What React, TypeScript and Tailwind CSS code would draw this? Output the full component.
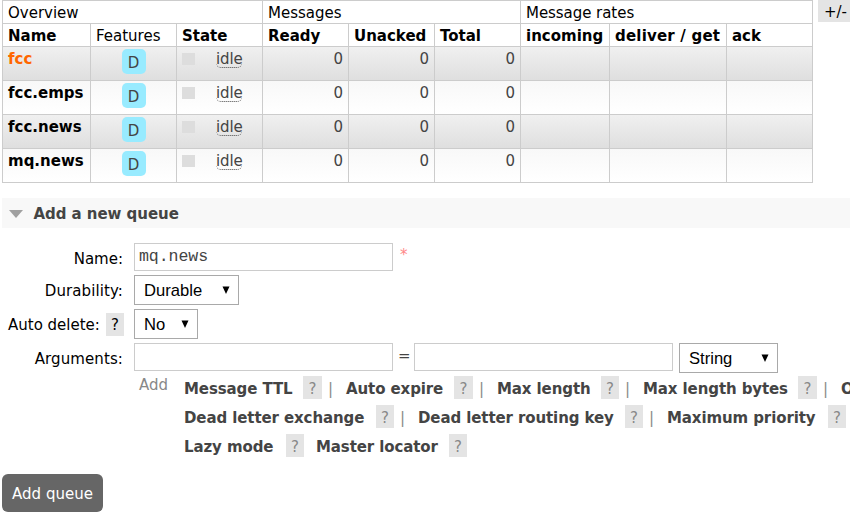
import React from "react";

const queues = ["fcc", "fcc.emps", "fcc.news", "mq.news"];

function Help({ className }: { className: string }) {
  return (
    <span className={`block h-[23px] shrink-0 bg-[#e4e4e4] text-center leading-5 ${className}`}>?</span>
  );
}

function Arrow() {
  return (
    <svg width="8" height="8" viewBox="0 0 8 8" className="shrink-0">
      <path d="M0.5 0.5H7.5L4 8Z" fill="#000" />
    </svg>
  );
}

function Select({ label, className }: { label: string; className: string }) {
  return (
    <div
      className={`flex h-[30px] shrink-0 items-center justify-between border border-[#a9a9a9] bg-white pr-[8px] pl-[9px] font-['Liberation_Sans',Arial,sans-serif] text-[16.6px] leading-5 text-black ${className}`}
    >
      <span className="pt-[2px]">{label}</span>
      <Arrow />
    </div>
  );
}

function Field({ value = "" }: { value?: string }) {
  return (
    <div className="h-7 w-[259px] shrink-0 border border-[#ccc] bg-white pt-[3px] pl-[4px] font-['Liberation_Mono','Courier_New',monospace] text-[16.6px] leading-5 tracking-[-0.1px] text-[#444]">
      {value}
    </div>
  );
}

function Label({ children }: { children: React.ReactNode }) {
  return (
    <div className="flex w-[134px] shrink-0 items-start justify-end pr-[11px] text-black">{children}</div>
  );
}

function Option({ label, width, help = "w-[18px]", pipe = "" }: { label: string; width: string; help?: string; pipe?: string }) {
  return (
    <div className="flex shrink-0 items-start">
      <span className={`block shrink-0 pt-[3px] font-bold text-[#444] ${width}`}>{label}</span>
      <Help className={`pt-[3px] text-[#888] ${help}`} />
      {pipe && <span className={`block shrink-0 pt-[3px] pl-[6px] text-[#888] ${pipe}`}>|</span>}
    </div>
  );
}

export default function App() {
  return (
    <div className="h-[516px] w-[850px] overflow-hidden bg-white pl-[2px] font-['DejaVu_Sans',Verdana,sans-serif] text-[15px] leading-5 whitespace-nowrap text-[#444]">
      <div className="flex h-[183px] items-start">
        <div className="grid w-[811px] shrink-0 grid-cols-[87px_85px_85px_85px_85px_85px_88px_116px_85px] grid-rows-[22px_22px_33px_33px_33px_33px] gap-px bg-[#ccc] p-px text-black">
          <div className="col-span-3 bg-white pt-[2px] pl-[5px]">Overview</div>
          <div className="col-span-3 bg-white pt-[2px] pl-[5px]">Messages</div>
          <div className="col-span-3 bg-white pt-[2px] pl-[5px] tracking-[-0.05px]">Message rates</div>
          <div className="bg-white pt-[2px] pl-[5px] font-bold">Name</div>
          <div className="bg-white pt-[2px] pl-[5px]">Features</div>
          <div className="bg-white pt-[2px] pl-[5px] font-bold">State</div>
          <div className="bg-white pt-[2px] pl-[5px] font-bold">Ready</div>
          <div className="bg-white pt-[2px] pl-[5px] font-bold">Unacked</div>
          <div className="bg-white pt-[2px] pl-[5px] font-bold">Total</div>
          <div className="bg-white pt-[2px] pl-[5px] font-bold">incoming</div>
          <div className="bg-white pt-[2px] pl-[5px] font-bold tracking-[0.2px]">deliver / get</div>
          <div className="bg-white pt-[2px] pl-[5px] font-bold">ack</div>
          {queues.map((q, i) => {
            const bg = i % 2 === 0 ? "bg-linear-to-b from-[#f0f0f0] to-[#dfdfdf]" : "bg-linear-to-b from-[#f8f8f8] to-white";
            return (
              <React.Fragment key={q}>
                <div className={`pt-[2px] pl-[5px] font-bold ${bg} ${i === 0 ? "text-[#ff6600]" : "text-black"}`}>{q}</div>
                <div className={`flex justify-center pt-[2px] ${bg}`}>
                  <span className="block h-[25px] w-6 rounded-[5px] bg-[#98ebff] pt-1 text-center text-[#444]">D</span>
                </div>
                <div className={`flex items-start pt-[2px] pl-[5px] text-[#444] ${bg}`}>
                  <span className="mt-1 mr-[21px] block h-3 w-[13px] bg-[#ddd]" />
                  <span className="block h-[19px] w-[26px] rounded-[5px] border-b border-dotted border-[#444] tracking-[-0.1px]">idle</span>
                </div>
                {[0, 1, 2].map((c) => (
                  <div key={c} className={`pt-[2px] pr-[5px] text-right text-[#444] ${bg}`}>0</div>
                ))}
                <div className={bg} />
                <div className={bg} />
                <div className={bg} />
              </React.Fragment>
            );
          })}
        </div>
        <div className="ml-[5px] h-[22px] w-[40px] shrink-0 bg-[#e4e4e4] pt-[2px] pl-[6px] text-black">+/-</div>
      </div>

      <div className="mt-[15px] flex h-[30px] items-start bg-[#f8f8f8] pt-[6px] pl-[7px] font-bold tracking-[-0.05px]">
        <svg width="14" height="8" viewBox="0 0 14 8" className="mt-[6px] mr-[10.5px]">
          <path d="M0 0H14L7 8Z" fill="#a0a0a0" />
        </svg>
        Add a new queue
      </div>

      <div className="-ml-[2px] flex flex-col gap-1 pt-[15px]">
        <div className="flex h-7 items-start">
          <Label><span className="pt-[6px]">Name:</span></Label>
          <Field value="mq.news" />
          <span className="pt-[2px] pl-[7px] text-[#f88]">*</span>
        </div>
        <div className="flex h-[30px] items-start">
          <Label><span className="pt-[6px] tracking-[0.1px]">Durability:</span></Label>
          <Select label="Durable" className="w-[105px]" />
        </div>
        <div className="flex h-[30px] items-start">
          <div className="flex w-[134px] shrink-0 items-start pl-2 text-black">
            <span className="w-[98px] pt-[6px]">Auto delete:</span>
            <div className="pt-1"><Help className="w-[18px] pt-[2px] text-black" /></div>
          </div>
          <Select label="No" className="w-16" />
        </div>
        <div className="flex h-7 items-start">
          <Label><span className="pt-[6px] tracking-[0.1px]">Arguments:</span></Label>
          <Field />
          <span className="w-[21px] shrink-0 pt-[3px] pl-[5px]">=</span>
          <Field />
          <Select label="String" className="ml-[6px] w-[99px]" />
        </div>
      </div>

      <div className="flex items-start pt-[5px]">
        <span className="-mt-[1px] w-[182px] shrink-0 pl-[137px] text-[#888]">Add</span>
        <div className="flex flex-col gap-[6px] tracking-[-0.1px]">
          <div className="flex">
            <Option label="Message TTL" width="w-[119px]" help="w-[19px]" pipe="w-6" />
            <Option label="Auto expire" width="w-[108px]" help="w-[19px]" pipe="w-6" />
            <Option label="Max length" width="w-[104px]" pipe="w-6" />
            <Option label="Max length bytes" width="w-[155px]" help="w-[19px]" pipe="w-6" />
            <span className="block shrink-0 pt-[3px] font-bold text-[#444]">O</span>
          </div>
          <div className="flex">
            <Option label="Dead letter exchange" width="w-[192px]" pipe="w-6" />
            <Option label="Dead letter routing key" width="w-[207px]" pipe="w-6" />
            <Option label="Maximum priority" width="w-[161px]" />
          </div>
          <div className="flex gap-3">
            <Option label="Lazy mode" width="w-[102px]" />
            <Option label="Master locator" width="w-[133px]" />
          </div>
        </div>
      </div>

      <button className="mt-[17px] block h-[38px] w-[101px] rounded-[6px] bg-[#666] pt-[2px] text-center text-white">Add queue</button>
    </div>
  );
}
